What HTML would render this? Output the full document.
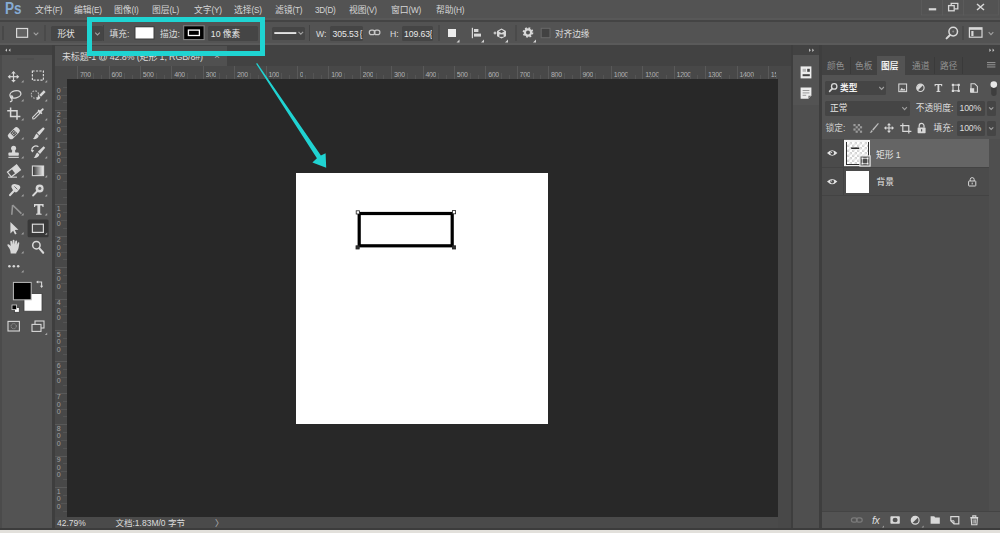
<!DOCTYPE html>
<html lang="zh-CN">
<head>
<meta charset="utf-8">
<title>Photoshop</title>
<style>
html,body{margin:0;padding:0;}
body{width:1000px;height:533px;overflow:hidden;background:#535353;position:relative;
 font-family:"Liberation Sans","Noto Sans CJK SC",sans-serif;font-size:9px;color:#dddddd;}
.a{position:absolute;}
.t{position:absolute;white-space:nowrap;line-height:12px;height:12px;}
.b{font-weight:bold;}
svg{position:absolute;left:0;top:0;overflow:visible;}
.rt{position:absolute;font-size:7px;letter-spacing:-0.3px;color:#b2b2b2;line-height:7px;white-space:nowrap;}
.vt{position:absolute;font-size:7px;color:#a2a2a2;line-height:8px;width:8px;text-align:center;}
.dd{position:absolute;background:#454545;border-radius:1.5px;}
</style>
</head>
<body>
<div class="a" style="left:0px;top:0px;width:1000px;height:18px;background:#535353;"></div>
<div class="a" style="left:0px;top:18px;width:1000px;height:1.5px;background:#585858;"></div>
<div class="a" style="left:0px;top:19.5px;width:1000px;height:2px;background:#444444;"></div>
<div class="t" style="left:5.2px;top:-0.6px;font-size:17.4px;line-height:19px;height:19px;font-weight:bold;color:#86abd3;transform:scaleX(0.78);transform-origin:0 0">Ps</div>
<div class="t" style="left:35px;top:3.5px;font-size:8.8px;color:#d6d6d6">文件<span style="font-size:8.2px;letter-spacing:-0.25px">(F)</span></div>
<div class="t" style="left:74px;top:3.5px;font-size:8.8px;color:#d6d6d6">编辑<span style="font-size:8.2px;letter-spacing:-0.25px">(E)</span></div>
<div class="t" style="left:114px;top:3.5px;font-size:8.8px;color:#d6d6d6">图像<span style="font-size:8.2px;letter-spacing:-0.25px">(I)</span></div>
<div class="t" style="left:152px;top:3.5px;font-size:8.8px;color:#d6d6d6">图层<span style="font-size:8.2px;letter-spacing:-0.25px">(L)</span></div>
<div class="t" style="left:194px;top:3.5px;font-size:8.8px;color:#d6d6d6">文字<span style="font-size:8.2px;letter-spacing:-0.25px">(Y)</span></div>
<div class="t" style="left:234px;top:3.5px;font-size:8.8px;color:#d6d6d6">选择<span style="font-size:8.2px;letter-spacing:-0.25px">(S)</span></div>
<div class="t" style="left:275px;top:3.5px;font-size:8.8px;color:#d6d6d6">滤镜<span style="font-size:8.2px;letter-spacing:-0.25px">(T)</span></div>
<div class="t" style="left:315px;top:3.5px;font-size:8.8px;color:#d6d6d6"><span style="font-size:8.2px;letter-spacing:-0.25px">3D(D)</span></div>
<div class="t" style="left:349px;top:3.5px;font-size:8.8px;color:#d6d6d6">视图<span style="font-size:8.2px;letter-spacing:-0.25px">(V)</span></div>
<div class="t" style="left:391px;top:3.5px;font-size:8.8px;color:#d6d6d6">窗口<span style="font-size:8.2px;letter-spacing:-0.25px">(W)</span></div>
<div class="t" style="left:436px;top:3.5px;font-size:8.8px;color:#d6d6d6">帮助<span style="font-size:8.2px;letter-spacing:-0.25px">(H)</span></div>
<div class="a" style="left:0px;top:21.5px;width:1000px;height:22px;background:#535353;"></div>
<div class="a" style="left:0px;top:43.2px;width:1000px;height:1.5px;background:#5a5a5a;"></div>
<div class="a" style="left:0px;top:44.7px;width:1000px;height:10px;background:#424242;"></div>
<div class="dd" style="left:51px;top:26px;width:52px;height:14.5px"></div>
<div class="t" style="left:57.4px;top:27.5px;font-size:8.7px;color:#e4e4e4">形状</div>
<div class="t" style="left:109.6px;top:27.5px;font-size:8.7px;">填充:</div>
<div class="t" style="left:160px;top:27.5px;font-size:8.7px;">描边:</div>
<div class="dd" style="left:207.5px;top:26px;width:50.5px;height:14.5px"></div>
<div class="t" style="left:210.8px;top:27.5px;font-size:8.7px;color:#e8e8e8">10 像素</div>
<div class="dd" style="left:272px;top:27px;width:33px;height:12.5px"></div>
<div class="t" style="left:316px;top:27.5px;font-size:8.7px;">W:</div>
<div class="dd" style="left:330.4px;top:26px;width:33px;height:14.5px;overflow:hidden"></div>
<div class="t" style="left:332.5px;top:27.5px;font-size:8.7px;letter-spacing:-0.1px;color:#e8e8e8">305.53</div>
<div class="t" style="left:359.5px;top:27.5px;font-size:8.7px;color:#e8e8e8;width:3px;overflow:hidden">{</div>
<div class="t" style="left:390px;top:27.5px;font-size:8.7px;">H:</div>
<div class="dd" style="left:402px;top:26px;width:30.7px;height:14.5px"></div>
<div class="t" style="left:404px;top:27.5px;font-size:8.7px;letter-spacing:-0.1px;color:#e8e8e8">109.63</div>
<div class="t" style="left:429.5px;top:27.5px;font-size:8.7px;color:#e8e8e8;width:2.5px;overflow:hidden">{</div>
<div class="t" style="left:555px;top:27.5px;font-size:8.7px;letter-spacing:-0.1px">对齐边缘</div>
<div class="a" style="left:51.5px;top:45px;width:742px;height:22px;background:#424242;"></div>
<div class="a" style="left:54.5px;top:46px;width:172.5px;height:20px;background:#505050;"></div>
<div class="t tt" style="left:62px;top:50.7px;font-size:9px;letter-spacing:-0.17px">未标题-1 @ 42.8% (矩形 1, RGB/8#)</div>
<div class="t" style="left:214.2px;top:50.2px;font-size:9.5px;color:#c8c8c8">×</div>
<div class="a" style="left:51.5px;top:66px;width:742px;height:462px;background:#424242;"></div>
<div class="a" style="left:54.5px;top:66px;width:723.5px;height:13px;background:#484848;"></div>
<div class="a" style="left:54.5px;top:79px;width:12px;height:438px;background:#484848;"></div>
<div class="a" style="left:66.5px;top:79px;width:711.5px;height:438px;background:#282828;"></div>
<div class="a" style="left:77.2px;top:66px;width:0.8px;height:13px;background:#595959;"></div>
<div class="rt" style="left:80.00px;top:71px;max-width:20.0px;overflow:hidden">700</div>
<div class="a" style="left:85.05px;top:75px;width:0.6px;height:4px;background:#545454;"></div>
<div class="a" style="left:92.9px;top:73px;width:0.6px;height:6px;background:#545454;"></div>
<div class="a" style="left:100.75px;top:75px;width:0.6px;height:4px;background:#545454;"></div>
<div class="a" style="left:108.6px;top:66px;width:0.8px;height:13px;background:#595959;"></div>
<div class="rt" style="left:111.40px;top:71px;max-width:20.0px;overflow:hidden">600</div>
<div class="a" style="left:116.45px;top:75px;width:0.6px;height:4px;background:#545454;"></div>
<div class="a" style="left:124.3px;top:73px;width:0.6px;height:6px;background:#545454;"></div>
<div class="a" style="left:132.15px;top:75px;width:0.6px;height:4px;background:#545454;"></div>
<div class="a" style="left:140.0px;top:66px;width:0.8px;height:13px;background:#595959;"></div>
<div class="rt" style="left:142.80px;top:71px;max-width:20.0px;overflow:hidden">500</div>
<div class="a" style="left:147.85px;top:75px;width:0.6px;height:4px;background:#545454;"></div>
<div class="a" style="left:155.7px;top:73px;width:0.6px;height:6px;background:#545454;"></div>
<div class="a" style="left:163.55px;top:75px;width:0.6px;height:4px;background:#545454;"></div>
<div class="a" style="left:171.4px;top:66px;width:0.8px;height:13px;background:#595959;"></div>
<div class="rt" style="left:174.20px;top:71px;max-width:20.0px;overflow:hidden">400</div>
<div class="a" style="left:179.25px;top:75px;width:0.6px;height:4px;background:#545454;"></div>
<div class="a" style="left:187.1px;top:73px;width:0.6px;height:6px;background:#545454;"></div>
<div class="a" style="left:194.95px;top:75px;width:0.6px;height:4px;background:#545454;"></div>
<div class="a" style="left:202.8px;top:66px;width:0.8px;height:13px;background:#595959;"></div>
<div class="rt" style="left:205.60px;top:71px;max-width:20.0px;overflow:hidden">300</div>
<div class="a" style="left:210.65px;top:75px;width:0.6px;height:4px;background:#545454;"></div>
<div class="a" style="left:218.5px;top:73px;width:0.6px;height:6px;background:#545454;"></div>
<div class="a" style="left:226.35px;top:75px;width:0.6px;height:4px;background:#545454;"></div>
<div class="a" style="left:234.2px;top:66px;width:0.8px;height:13px;background:#595959;"></div>
<div class="rt" style="left:237.00px;top:71px;max-width:20.0px;overflow:hidden">200</div>
<div class="a" style="left:242.05px;top:75px;width:0.6px;height:4px;background:#545454;"></div>
<div class="a" style="left:249.9px;top:73px;width:0.6px;height:6px;background:#545454;"></div>
<div class="a" style="left:257.75px;top:75px;width:0.6px;height:4px;background:#545454;"></div>
<div class="a" style="left:265.6px;top:66px;width:0.8px;height:13px;background:#595959;"></div>
<div class="rt" style="left:268.40px;top:71px;max-width:20.0px;overflow:hidden">100</div>
<div class="a" style="left:273.45px;top:75px;width:0.6px;height:4px;background:#545454;"></div>
<div class="a" style="left:281.3px;top:73px;width:0.6px;height:6px;background:#545454;"></div>
<div class="a" style="left:289.15px;top:75px;width:0.6px;height:4px;background:#545454;"></div>
<div class="a" style="left:297.0px;top:66px;width:0.8px;height:13px;background:#595959;"></div>
<div class="rt" style="left:299.80px;top:71px;max-width:20.0px;overflow:hidden">0</div>
<div class="a" style="left:304.85px;top:75px;width:0.6px;height:4px;background:#545454;"></div>
<div class="a" style="left:312.7px;top:73px;width:0.6px;height:6px;background:#545454;"></div>
<div class="a" style="left:320.55px;top:75px;width:0.6px;height:4px;background:#545454;"></div>
<div class="a" style="left:328.4px;top:66px;width:0.8px;height:13px;background:#595959;"></div>
<div class="rt" style="left:331.20px;top:71px;max-width:20.0px;overflow:hidden">100</div>
<div class="a" style="left:336.25px;top:75px;width:0.6px;height:4px;background:#545454;"></div>
<div class="a" style="left:344.1px;top:73px;width:0.6px;height:6px;background:#545454;"></div>
<div class="a" style="left:351.95px;top:75px;width:0.6px;height:4px;background:#545454;"></div>
<div class="a" style="left:359.8px;top:66px;width:0.8px;height:13px;background:#595959;"></div>
<div class="rt" style="left:362.60px;top:71px;max-width:20.0px;overflow:hidden">200</div>
<div class="a" style="left:367.65px;top:75px;width:0.6px;height:4px;background:#545454;"></div>
<div class="a" style="left:375.5px;top:73px;width:0.6px;height:6px;background:#545454;"></div>
<div class="a" style="left:383.35px;top:75px;width:0.6px;height:4px;background:#545454;"></div>
<div class="a" style="left:391.2px;top:66px;width:0.8px;height:13px;background:#595959;"></div>
<div class="rt" style="left:394.00px;top:71px;max-width:20.0px;overflow:hidden">300</div>
<div class="a" style="left:399.05px;top:75px;width:0.6px;height:4px;background:#545454;"></div>
<div class="a" style="left:406.9px;top:73px;width:0.6px;height:6px;background:#545454;"></div>
<div class="a" style="left:414.75px;top:75px;width:0.6px;height:4px;background:#545454;"></div>
<div class="a" style="left:422.6px;top:66px;width:0.8px;height:13px;background:#595959;"></div>
<div class="rt" style="left:425.40px;top:71px;max-width:20.0px;overflow:hidden">400</div>
<div class="a" style="left:430.45px;top:75px;width:0.6px;height:4px;background:#545454;"></div>
<div class="a" style="left:438.3px;top:73px;width:0.6px;height:6px;background:#545454;"></div>
<div class="a" style="left:446.15px;top:75px;width:0.6px;height:4px;background:#545454;"></div>
<div class="a" style="left:454.0px;top:66px;width:0.8px;height:13px;background:#595959;"></div>
<div class="rt" style="left:456.80px;top:71px;max-width:20.0px;overflow:hidden">500</div>
<div class="a" style="left:461.85px;top:75px;width:0.6px;height:4px;background:#545454;"></div>
<div class="a" style="left:469.7px;top:73px;width:0.6px;height:6px;background:#545454;"></div>
<div class="a" style="left:477.55px;top:75px;width:0.6px;height:4px;background:#545454;"></div>
<div class="a" style="left:485.4px;top:66px;width:0.8px;height:13px;background:#595959;"></div>
<div class="rt" style="left:488.20px;top:71px;max-width:20.0px;overflow:hidden">600</div>
<div class="a" style="left:493.25px;top:75px;width:0.6px;height:4px;background:#545454;"></div>
<div class="a" style="left:501.1px;top:73px;width:0.6px;height:6px;background:#545454;"></div>
<div class="a" style="left:508.95px;top:75px;width:0.6px;height:4px;background:#545454;"></div>
<div class="a" style="left:516.8px;top:66px;width:0.8px;height:13px;background:#595959;"></div>
<div class="rt" style="left:519.60px;top:71px;max-width:20.0px;overflow:hidden">700</div>
<div class="a" style="left:524.65px;top:75px;width:0.6px;height:4px;background:#545454;"></div>
<div class="a" style="left:532.5px;top:73px;width:0.6px;height:6px;background:#545454;"></div>
<div class="a" style="left:540.35px;top:75px;width:0.6px;height:4px;background:#545454;"></div>
<div class="a" style="left:548.2px;top:66px;width:0.8px;height:13px;background:#595959;"></div>
<div class="rt" style="left:551.00px;top:71px;max-width:20.0px;overflow:hidden">800</div>
<div class="a" style="left:556.05px;top:75px;width:0.6px;height:4px;background:#545454;"></div>
<div class="a" style="left:563.9px;top:73px;width:0.6px;height:6px;background:#545454;"></div>
<div class="a" style="left:571.75px;top:75px;width:0.6px;height:4px;background:#545454;"></div>
<div class="a" style="left:579.6px;top:66px;width:0.8px;height:13px;background:#595959;"></div>
<div class="rt" style="left:582.40px;top:71px;max-width:20.0px;overflow:hidden">900</div>
<div class="a" style="left:587.45px;top:75px;width:0.6px;height:4px;background:#545454;"></div>
<div class="a" style="left:595.3px;top:73px;width:0.6px;height:6px;background:#545454;"></div>
<div class="a" style="left:603.15px;top:75px;width:0.6px;height:4px;background:#545454;"></div>
<div class="a" style="left:611.0px;top:66px;width:0.8px;height:13px;background:#595959;"></div>
<div class="rt" style="left:613.80px;top:71px;max-width:20.0px;overflow:hidden">1000</div>
<div class="a" style="left:618.85px;top:75px;width:0.6px;height:4px;background:#545454;"></div>
<div class="a" style="left:626.7px;top:73px;width:0.6px;height:6px;background:#545454;"></div>
<div class="a" style="left:634.55px;top:75px;width:0.6px;height:4px;background:#545454;"></div>
<div class="a" style="left:642.4px;top:66px;width:0.8px;height:13px;background:#595959;"></div>
<div class="rt" style="left:645.20px;top:71px;max-width:20.0px;overflow:hidden">1100</div>
<div class="a" style="left:650.25px;top:75px;width:0.6px;height:4px;background:#545454;"></div>
<div class="a" style="left:658.1px;top:73px;width:0.6px;height:6px;background:#545454;"></div>
<div class="a" style="left:665.95px;top:75px;width:0.6px;height:4px;background:#545454;"></div>
<div class="a" style="left:673.8px;top:66px;width:0.8px;height:13px;background:#595959;"></div>
<div class="rt" style="left:676.60px;top:71px;max-width:20.0px;overflow:hidden">1200</div>
<div class="a" style="left:681.65px;top:75px;width:0.6px;height:4px;background:#545454;"></div>
<div class="a" style="left:689.5px;top:73px;width:0.6px;height:6px;background:#545454;"></div>
<div class="a" style="left:697.35px;top:75px;width:0.6px;height:4px;background:#545454;"></div>
<div class="a" style="left:705.2px;top:66px;width:0.8px;height:13px;background:#595959;"></div>
<div class="rt" style="left:708.00px;top:71px;max-width:20.0px;overflow:hidden">1300</div>
<div class="a" style="left:713.05px;top:75px;width:0.6px;height:4px;background:#545454;"></div>
<div class="a" style="left:720.9px;top:73px;width:0.6px;height:6px;background:#545454;"></div>
<div class="a" style="left:728.75px;top:75px;width:0.6px;height:4px;background:#545454;"></div>
<div class="a" style="left:736.6px;top:66px;width:0.8px;height:13px;background:#595959;"></div>
<div class="rt" style="left:739.40px;top:71px;max-width:20.0px;overflow:hidden">1400</div>
<div class="a" style="left:744.45px;top:75px;width:0.6px;height:4px;background:#545454;"></div>
<div class="a" style="left:752.3px;top:73px;width:0.6px;height:6px;background:#545454;"></div>
<div class="a" style="left:760.15px;top:75px;width:0.6px;height:4px;background:#545454;"></div>
<div class="a" style="left:768.0px;top:66px;width:0.8px;height:13px;background:#595959;"></div>
<div class="rt" style="left:770.80px;top:71px;max-width:4.8px;overflow:hidden">1500</div>
<div class="a" style="left:775.85px;top:75px;width:0.6px;height:4px;background:#545454;"></div>
<div class="vt" style="left:54.6px;top:86.80px">0</div>
<div class="vt" style="left:54.6px;top:94.30px">0</div>
<div class="a" style="left:62.5px;top:86.65px;width:4px;height:0.6px;background:#545454;"></div>
<div class="a" style="left:60.5px;top:94.5px;width:6px;height:0.6px;background:#545454;"></div>
<div class="a" style="left:62.5px;top:102.35px;width:4px;height:0.6px;background:#545454;"></div>
<div class="a" style="left:54.5px;top:110.2px;width:12px;height:0.8px;background:#595959;"></div>
<div class="vt" style="left:54.6px;top:110.70px">2</div>
<div class="vt" style="left:54.6px;top:118.20px">0</div>
<div class="vt" style="left:54.6px;top:125.70px">0</div>
<div class="a" style="left:62.5px;top:118.05px;width:4px;height:0.6px;background:#545454;"></div>
<div class="a" style="left:60.5px;top:125.9px;width:6px;height:0.6px;background:#545454;"></div>
<div class="a" style="left:62.5px;top:133.75px;width:4px;height:0.6px;background:#545454;"></div>
<div class="a" style="left:54.5px;top:141.6px;width:12px;height:0.8px;background:#595959;"></div>
<div class="vt" style="left:54.6px;top:142.10px">1</div>
<div class="vt" style="left:54.6px;top:149.60px">0</div>
<div class="vt" style="left:54.6px;top:157.10px">0</div>
<div class="a" style="left:62.5px;top:149.45px;width:4px;height:0.6px;background:#545454;"></div>
<div class="a" style="left:60.5px;top:157.3px;width:6px;height:0.6px;background:#545454;"></div>
<div class="a" style="left:62.5px;top:165.15px;width:4px;height:0.6px;background:#545454;"></div>
<div class="a" style="left:54.5px;top:173.0px;width:12px;height:0.8px;background:#595959;"></div>
<div class="vt" style="left:54.6px;top:173.50px">0</div>
<div class="a" style="left:62.5px;top:180.85px;width:4px;height:0.6px;background:#545454;"></div>
<div class="a" style="left:60.5px;top:188.7px;width:6px;height:0.6px;background:#545454;"></div>
<div class="a" style="left:62.5px;top:196.55px;width:4px;height:0.6px;background:#545454;"></div>
<div class="a" style="left:54.5px;top:204.4px;width:12px;height:0.8px;background:#595959;"></div>
<div class="vt" style="left:54.6px;top:204.90px">1</div>
<div class="vt" style="left:54.6px;top:212.40px">0</div>
<div class="vt" style="left:54.6px;top:219.90px">0</div>
<div class="a" style="left:62.5px;top:212.25px;width:4px;height:0.6px;background:#545454;"></div>
<div class="a" style="left:60.5px;top:220.1px;width:6px;height:0.6px;background:#545454;"></div>
<div class="a" style="left:62.5px;top:227.95px;width:4px;height:0.6px;background:#545454;"></div>
<div class="a" style="left:54.5px;top:235.8px;width:12px;height:0.8px;background:#595959;"></div>
<div class="vt" style="left:54.6px;top:236.30px">2</div>
<div class="vt" style="left:54.6px;top:243.80px">0</div>
<div class="vt" style="left:54.6px;top:251.30px">0</div>
<div class="a" style="left:62.5px;top:243.65px;width:4px;height:0.6px;background:#545454;"></div>
<div class="a" style="left:60.5px;top:251.5px;width:6px;height:0.6px;background:#545454;"></div>
<div class="a" style="left:62.5px;top:259.35px;width:4px;height:0.6px;background:#545454;"></div>
<div class="a" style="left:54.5px;top:267.2px;width:12px;height:0.8px;background:#595959;"></div>
<div class="vt" style="left:54.6px;top:267.70px">3</div>
<div class="vt" style="left:54.6px;top:275.20px">0</div>
<div class="vt" style="left:54.6px;top:282.70px">0</div>
<div class="a" style="left:62.5px;top:275.05px;width:4px;height:0.6px;background:#545454;"></div>
<div class="a" style="left:60.5px;top:282.9px;width:6px;height:0.6px;background:#545454;"></div>
<div class="a" style="left:62.5px;top:290.75px;width:4px;height:0.6px;background:#545454;"></div>
<div class="a" style="left:54.5px;top:298.6px;width:12px;height:0.8px;background:#595959;"></div>
<div class="vt" style="left:54.6px;top:299.10px">4</div>
<div class="vt" style="left:54.6px;top:306.60px">0</div>
<div class="vt" style="left:54.6px;top:314.10px">0</div>
<div class="a" style="left:62.5px;top:306.45px;width:4px;height:0.6px;background:#545454;"></div>
<div class="a" style="left:60.5px;top:314.3px;width:6px;height:0.6px;background:#545454;"></div>
<div class="a" style="left:62.5px;top:322.15px;width:4px;height:0.6px;background:#545454;"></div>
<div class="a" style="left:54.5px;top:330.0px;width:12px;height:0.8px;background:#595959;"></div>
<div class="vt" style="left:54.6px;top:330.50px">5</div>
<div class="vt" style="left:54.6px;top:338.00px">0</div>
<div class="vt" style="left:54.6px;top:345.50px">0</div>
<div class="a" style="left:62.5px;top:337.85px;width:4px;height:0.6px;background:#545454;"></div>
<div class="a" style="left:60.5px;top:345.7px;width:6px;height:0.6px;background:#545454;"></div>
<div class="a" style="left:62.5px;top:353.55px;width:4px;height:0.6px;background:#545454;"></div>
<div class="a" style="left:54.5px;top:361.4px;width:12px;height:0.8px;background:#595959;"></div>
<div class="vt" style="left:54.6px;top:361.90px">6</div>
<div class="vt" style="left:54.6px;top:369.40px">0</div>
<div class="vt" style="left:54.6px;top:376.90px">0</div>
<div class="a" style="left:62.5px;top:369.25px;width:4px;height:0.6px;background:#545454;"></div>
<div class="a" style="left:60.5px;top:377.1px;width:6px;height:0.6px;background:#545454;"></div>
<div class="a" style="left:62.5px;top:384.95px;width:4px;height:0.6px;background:#545454;"></div>
<div class="a" style="left:54.5px;top:392.8px;width:12px;height:0.8px;background:#595959;"></div>
<div class="vt" style="left:54.6px;top:393.30px">7</div>
<div class="vt" style="left:54.6px;top:400.80px">0</div>
<div class="vt" style="left:54.6px;top:408.30px">0</div>
<div class="a" style="left:62.5px;top:400.65px;width:4px;height:0.6px;background:#545454;"></div>
<div class="a" style="left:60.5px;top:408.5px;width:6px;height:0.6px;background:#545454;"></div>
<div class="a" style="left:62.5px;top:416.35px;width:4px;height:0.6px;background:#545454;"></div>
<div class="a" style="left:54.5px;top:424.2px;width:12px;height:0.8px;background:#595959;"></div>
<div class="vt" style="left:54.6px;top:424.70px">8</div>
<div class="vt" style="left:54.6px;top:432.20px">0</div>
<div class="vt" style="left:54.6px;top:439.70px">0</div>
<div class="a" style="left:62.5px;top:432.05px;width:4px;height:0.6px;background:#545454;"></div>
<div class="a" style="left:60.5px;top:439.9px;width:6px;height:0.6px;background:#545454;"></div>
<div class="a" style="left:62.5px;top:447.75px;width:4px;height:0.6px;background:#545454;"></div>
<div class="a" style="left:54.5px;top:455.6px;width:12px;height:0.8px;background:#595959;"></div>
<div class="vt" style="left:54.6px;top:456.10px">9</div>
<div class="vt" style="left:54.6px;top:463.60px">0</div>
<div class="vt" style="left:54.6px;top:471.10px">0</div>
<div class="a" style="left:62.5px;top:463.45px;width:4px;height:0.6px;background:#545454;"></div>
<div class="a" style="left:60.5px;top:471.3px;width:6px;height:0.6px;background:#545454;"></div>
<div class="a" style="left:62.5px;top:479.15px;width:4px;height:0.6px;background:#545454;"></div>
<div class="a" style="left:54.5px;top:487.0px;width:12px;height:0.8px;background:#595959;"></div>
<div class="vt" style="left:54.6px;top:487.50px">1</div>
<div class="vt" style="left:54.6px;top:495.00px">0</div>
<div class="vt" style="left:54.6px;top:502.50px">0</div>
<div class="a" style="left:62.5px;top:494.85px;width:4px;height:0.6px;background:#545454;"></div>
<div class="a" style="left:60.5px;top:502.7px;width:6px;height:0.6px;background:#545454;"></div>
<div class="a" style="left:62.5px;top:510.55px;width:4px;height:0.6px;background:#545454;"></div>
<div class="a" style="left:54.5px;top:66px;width:12px;height:13px;background:#484848;"></div>
<div class="a" style="left:296px;top:173px;width:252px;height:251px;background:#ffffff;"></div>
<div class="a" style="left:54.5px;top:517px;width:738.5px;height:11px;background:#4a4a4a;"></div>
<div class="t" style="left:57px;top:516.5px;font-size:8.5px;">42.79%</div>
<div class="t" style="left:115.5px;top:516.5px;font-size:8.5px;">文档:1.83M/0 字节</div>
<div class="t" style="left:215px;top:516.5px;font-size:8.5px;color:#bdbdbd">〉</div>
<div class="a" style="left:778px;top:66px;width:12.5px;height:462px;background:#484848;"></div>
<div class="a" style="left:790.5px;top:45px;width:2.5px;height:483px;background:#3e3e3e;"></div>
<div class="a" style="left:0px;top:54.5px;width:51.5px;height:473.5px;background:#535353;"></div>
<div class="a" style="left:0px;top:45px;width:51.5px;height:9.5px;background:#424242;"></div>
<div class="a" style="left:0px;top:54.5px;width:1.5px;height:473.5px;background:#4b4b4b;"></div>
<div class="a" style="left:51.5px;top:45px;width:3px;height:483px;background:#3e3e3e;"></div>
<div class="a" style="left:793px;top:45px;width:26px;height:9.5px;background:#424242;"></div>
<div class="a" style="left:793px;top:54.5px;width:26px;height:50px;background:#535353;"></div>
<div class="a" style="left:793px;top:104.5px;width:26px;height:423.5px;background:#4f4f4f;"></div>
<div class="a" style="left:819px;top:45px;width:3px;height:483px;background:#3e3e3e;"></div>
<div class="a" style="left:822px;top:45px;width:178px;height:10.5px;background:#424242;"></div>
<div class="a" style="left:822px;top:55.5px;width:178px;height:19.5px;background:#424242;"></div>
<div class="a" style="left:876.5px;top:55.5px;width:28px;height:20px;background:#535353;"></div>
<div class="a" style="left:822px;top:75px;width:178px;height:63.5px;background:#535353;"></div>
<div class="a" style="left:822px;top:138.5px;width:178px;height:372.5px;background:#4b4b4b;"></div>
<div class="a" style="left:988.5px;top:138.5px;width:11.5px;height:372.5px;background:#4f4f4f;"></div>
<div class="a" style="left:822px;top:511px;width:178px;height:17px;background:#535353;"></div>
<div class="a" style="left:822px;top:510.5px;width:178px;height:0.8px;background:#444444;"></div>
<div class="t" style="left:827px;top:59.5px;font-size:8.7px;color:#929292;">颜色</div>
<div class="t" style="left:855px;top:59.5px;font-size:8.7px;color:#929292;">色板</div>
<div class="t" style="left:881px;top:59.5px;font-size:8.7px;color:#f0f0f0;font-weight:bold;">图层</div>
<div class="t" style="left:912px;top:59.5px;font-size:8.7px;color:#929292;">通道</div>
<div class="t" style="left:940px;top:59.5px;font-size:8.7px;color:#929292;">路径</div>
<div class="a" style="left:850px;top:57px;width:0.8px;height:17px;background:#3a3a3a;"></div>
<div class="a" style="left:934px;top:57px;width:0.8px;height:17px;background:#3a3a3a;"></div>
<div class="a" style="left:962px;top:57px;width:0.8px;height:17px;background:#3a3a3a;"></div>
<div class="dd" style="left:824.5px;top:81px;width:61.5px;height:13.5px"></div>
<div class="t" style="left:840px;top:82px;font-size:8.7px;font-weight:bold;color:#f0f0f0">类型</div>
<div class="dd" style="left:824.5px;top:101px;width:85px;height:14.5px"></div>
<div class="t" style="left:830px;top:102.3px;font-size:8.7px;color:#e6e6e6">正常</div>
<div class="t" style="left:915.8px;top:102.3px;font-size:8.7px;letter-spacing:0.1px">不透明度:</div>
<div class="dd" style="left:957px;top:101px;width:28px;height:14.5px"></div>
<div class="t" style="left:959.5px;top:102.3px;font-size:8.7px;letter-spacing:-0.2px">100%</div>
<div class="dd" style="left:986.5px;top:101px;width:9.5px;height:14.5px"></div>
<div class="t" style="left:825.5px;top:122px;font-size:8.7px;color:#cfcfcf">锁定:</div>
<div class="t" style="left:933.5px;top:122px;font-size:8.7px;">填充:</div>
<div class="dd" style="left:957px;top:121px;width:28px;height:14.5px"></div>
<div class="t" style="left:959.5px;top:122.3px;font-size:8.7px;letter-spacing:-0.2px">100%</div>
<div class="dd" style="left:986.5px;top:121px;width:9.5px;height:14.5px"></div>
<div class="a" style="left:843.5px;top:139px;width:145px;height:28px;background:#656565;"></div>
<div class="a" style="left:822px;top:167px;width:166.5px;height:0.8px;background:#434343;"></div>
<div class="a" style="left:822px;top:195px;width:166.5px;height:0.8px;background:#434343;"></div>
<div class="a" style="left:842.8px;top:139px;width:0.7px;height:56px;background:#434343;"></div>
<div class="t" style="left:876px;top:148.5px;font-size:8.7px;color:#e4e4e4">矩形 1</div>
<div class="t" style="left:876.5px;top:176px;font-size:8.7px;color:#e4e4e4">背景</div>
<div class="a" style="left:844.3px;top:140.2px;width:25.8px;height:25.9px;background:#f4f4f4;"></div>
<div class="a" style="left:845.7px;top:141.6px;width:23px;height:23.1px;background:#2e2e2e;"></div>
<div class="a" style="left:846.5px;top:142.4px;width:21.4px;height:21.5px;background-color:#fff;background-image:linear-gradient(45deg,#d4d4d4 25%,transparent 25%,transparent 75%,#d4d4d4 75%),linear-gradient(45deg,#d4d4d4 25%,transparent 25%,transparent 75%,#d4d4d4 75%);background-size:5px 5px;background-position:0 0,2.5px 2.5px;"></div>
<div class="a" style="left:846px;top:171px;width:22.5px;height:21.5px;background:#ffffff;"></div>
<div class="t" style="left:872px;top:513.5px;font-size:10.5px;font-style:italic;color:#dedede;letter-spacing:-0.3px">fx</div>
<div class="a" style="left:0px;top:528px;width:1000px;height:1.6px;background:#3c3c3c;"></div>
<div class="a" style="left:0px;top:529.8px;width:1000px;height:3.2px;background:#e2e0db;"></div>
<div class="a" style="left:87.2px;top:16.6px;width:168.2px;height:29px;border:5.7px solid #1fd4d2;"></div>
<svg width="1000" height="533" viewBox="0 0 1000 533">
<g fill="none" stroke="#5d5d5d" stroke-width="0.8"><rect x="921.5" y="-1" width="21" height="16"/><rect x="942.5" y="-1" width="21" height="16"/><rect x="963.5" y="-1" width="35" height="16"/></g>
<rect x="928.8" y="8.2" width="7.4" height="2.2" fill="#d8d8d8"/>
<g fill="none" stroke="#d8d8d8" stroke-width="1.3"><rect x="948.6" y="5.6" width="5.6" height="5.2" fill="#535353"/><path d="M951.2 5.4 V3.4 H957.8 V8.8 H954.6"/></g>
<path d="M977 4 L984 10 M984 4 L977 10" stroke="#d8d8d8" stroke-width="1.5" fill="none"/>
<g fill="#3f3f3f"><rect x="2.5" y="26" width="1" height="14"/></g>
<rect x="16.6" y="28.5" width="11" height="8.8" fill="#626262" stroke="#d8d8d8" stroke-width="1.2"/>
<path d="M33.70 32.60 L36.00 35.00 L38.30 32.60" fill="none" stroke="#a0a0a0" stroke-width="1.1"/>
<rect x="44.50" y="25" width="1" height="16" fill="#434343"/>
<path d="M95.20 32.60 L97.50 35.00 L99.80 32.60" fill="none" stroke="#a0a0a0" stroke-width="1.1"/>
<rect x="103.00" y="25" width="1" height="16" fill="#434343"/>
<rect x="134.5" y="26.3" width="20" height="13.2" fill="#3c3c3c"/>
<rect x="135.5" y="27.3" width="18" height="11.2" fill="#ffffff"/>
<rect x="183.7" y="25.8" width="20.4" height="13.8" fill="#000" stroke="#8a8a8a" stroke-width="1"/>
<rect x="188.4" y="30.1" width="11" height="5.4" fill="none" stroke="#fff" stroke-width="1.3"/>
<rect x="274.3" y="32.2" width="22" height="1.7" fill="#f4f4f4"/>
<path d="M298.50 31.80 L300.80 34.20 L303.10 31.80" fill="none" stroke="#a0a0a0" stroke-width="1.1"/>
<rect x="309.00" y="25" width="1" height="16" fill="#434343"/>
<g fill="none" stroke="#c8c8c8" stroke-width="1.2"><rect x="369.3" y="30.2" width="5.6" height="4.4" rx="2.2"/><rect x="374.3" y="30.2" width="5.6" height="4.4" rx="2.2"/></g>
<rect x="438.50" y="25" width="1" height="16" fill="#434343"/>
<rect x="448" y="29" width="8" height="8" fill="#ececec"/>
<path d="M459.50 42.60 L459.50 39.60 L456.50 42.60 Z" fill="#d4d4d4"/>
<g fill="#d8d8d8"><rect x="471.8" y="27.8" width="1.2" height="10.4"/><rect x="474" y="29" width="4.4" height="3"/><rect x="474" y="33.6" width="7" height="3"/></g>
<path d="M484.00 42.60 L484.00 39.60 L481.00 42.60 Z" fill="#d4d4d4"/>
<g fill="#d8d8d8"><path d="M497 31 L501.5 28.4 L506 31 L506 36.2 L501.5 38.6 L497 36.2 Z"/><rect x="493.6" y="32.4" width="2.8" height="1.2"/><rect x="494.4" y="31.6" width="1.2" height="2.8"/></g>
<path d="M498.6 31.4 L501.5 29.8 L504.4 31.4 L501.5 33 Z" fill="#535353"/><rect x="499.4" y="34.4" width="4.2" height="2.4" fill="#535353"/>
<path d="M508.00 42.60 L508.00 39.60 L505.00 42.60 Z" fill="#d4d4d4"/>
<rect x="515.50" y="25" width="1" height="16" fill="#434343"/>
<circle cx="528" cy="32.5" r="3.1" fill="none" stroke="#d8d8d8" stroke-width="2.2"/>
<circle cx="528" cy="32.5" r="4.5" fill="none" stroke="#d8d8d8" stroke-width="1.7" stroke-dasharray="1.767 1.767"/>
<path d="M536.00 42.60 L536.00 39.60 L533.00 42.60 Z" fill="#d4d4d4"/>
<rect x="541.2" y="28.3" width="8.8" height="9.4" fill="#424242" stroke="#686868" stroke-width="1"/>
<circle cx="953.2" cy="31.6" r="4.3" fill="none" stroke="#d8d8d8" stroke-width="1.5"/><path d="M950 35 L946.6 38.4" stroke="#d8d8d8" stroke-width="2" stroke-linecap="round"/>
<circle cx="953.2" cy="31.6" r="1" fill="#8a8a8a"/>
<rect x="962.50" y="26" width="1" height="14" fill="#434343"/>
<rect x="969.4" y="27.8" width="12.6" height="9.4" fill="none" stroke="#d8d8d8" stroke-width="1.2"/><rect x="969.4" y="27.8" width="12.6" height="2" fill="#d8d8d8"/><rect x="971.3" y="31" width="2.2" height="5" fill="#d8d8d8"/>
<path d="M988.70 32.20 L991.00 34.60 L993.30 32.20" fill="none" stroke="#a0a0a0" stroke-width="1.1"/>
<path d="M809.1 48.599999999999994 L810.8000000000001 50.3 L809.1 52.0 Z M812.3000000000001 48.599999999999994 L814.0 50.3 L812.3000000000001 52.0 Z" fill="#c9c9c9"/>
<path d="M989.4 48.599999999999994 L991.1 50.3 L989.4 52.0 Z M992.6 48.599999999999994 L994.3 50.3 L992.6 52.0 Z" fill="#c9c9c9"/>
<path d="M5.2 48.6 L7 50.2 L5.2 51.8 Z M8.6 48.6 L10.4 50.2 L8.6 51.8 Z" fill="#c9c9c9" transform="rotate(180 7.8 50.2)"/>
<rect x="17" y="58.5" width="17" height="1" fill="#4a4a4a"/>
<g fill="#d8d8d8"><rect x="9.5" y="76.10000000000001" width="8" height="1.2"/><rect x="12.9" y="72.7" width="1.2" height="8"/><path d="M13.5 70.9 l2.3 2.6 h-4.6 Z M13.5 82.5 l2.3 -2.6 h-4.6 Z M7.7 76.7 l2.6 -2.3 v4.6 Z M19.3 76.7 l-2.6 -2.3 v4.6 Z"/></g>
<path d="M23.60 82.40 L23.60 80.00 L21.20 82.40 Z" fill="#a4a4a4"/>
<rect x="32.4" y="71" width="11" height="9.2" fill="none" stroke="#d8d8d8" stroke-width="1.2" stroke-dasharray="2.2 1.3"/>
<path d="M47.20 82.40 L47.20 80.00 L44.80 82.40 Z" fill="#a4a4a4"/>
<g fill="none" stroke="#d8d8d8" stroke-width="1.3"><ellipse cx="15.4" cy="94.4" rx="5.6" ry="3.6" transform="rotate(-14 15.4 94.4)"/><path d="M11.3 96.6 C10.4 98.4 12.6 98.8 12 100.4 C11.6 101.4 10.6 101.8 10 101.4"/><circle cx="11.6" cy="97" r="1.1"/></g>
<path d="M23.60 101.40 L23.60 99.00 L21.20 101.40 Z" fill="#a4a4a4"/>
<g fill="none" stroke="#b4b4b4" stroke-width="1.1" stroke-dasharray="1.7 1.2"><circle cx="34.9" cy="94.6" r="3.7"/></g>
<path d="M43.8 90.2 L45.6 92 L41 96.8 L39.2 95 Z" fill="#d8d8d8"/><path d="M38.6 95.6 L40.4 97.4 C39.8 99.4 37.6 100 36 99.6 C37.4 98.6 37.4 96.8 38.6 95.6 Z" fill="#d8d8d8"/>
<path d="M47.20 101.40 L47.20 99.00 L44.80 101.40 Z" fill="#a4a4a4"/>
<g fill="none" stroke="#d8d8d8" stroke-width="1.5"><path d="M10.6 107.6 V116.6 H20.4"/><path d="M7.2 110.8 H17 V119.8"/></g>
<path d="M23.60 120.40 L23.60 118.00 L21.20 120.40 Z" fill="#a4a4a4"/>
<g><path d="M33 119 L32.6 117.4 L38.6 111.4 L40.2 113 L34.4 118.8 Z" fill="none" stroke="#d8d8d8" stroke-width="1.1"/><path d="M37.6 110.4 L41.4 114.2 L42.4 113.2 L41.4 112 L43.6 109.8 C44.2 109 43 107.6 42.2 108.4 L40 110.6 L38.6 109.4 Z" fill="#d8d8d8"/></g>
<path d="M47.20 120.40 L47.20 118.00 L44.80 120.40 Z" fill="#a4a4a4"/>
<g transform="rotate(-45 13.8 133.2)"><rect x="7" y="130" width="13.6" height="6.4" rx="2.6" fill="#d8d8d8"/><rect x="11.4" y="130.6" width="4.8" height="5.2" fill="#535353"/><g fill="#d8d8d8"><circle cx="12.8" cy="132.2" r="0.6"/><circle cx="14.8" cy="132.2" r="0.6"/><circle cx="12.8" cy="134.2" r="0.6"/><circle cx="14.8" cy="134.2" r="0.6"/></g></g>
<path d="M23.60 139.40 L23.60 137.00 L21.20 139.40 Z" fill="#a4a4a4"/>
<path d="M43.2 127.2 L44.8 128.8 L39.4 135.2 L37 132.8 Z" fill="#d8d8d8"/><path d="M36.4 133.4 L38.8 135.8 C38.2 138.4 35.2 139.6 32.8 139 C34.6 137.8 34.8 135 36.4 133.4 Z" fill="#d8d8d8"/>
<path d="M47.20 139.40 L47.20 137.00 L44.80 139.40 Z" fill="#a4a4a4"/>
<g fill="#d8d8d8"><circle cx="13.6" cy="148.2" r="2.5"/><path d="M12.4 149.6 H14.8 L15.4 153 H11.8 Z"/><rect x="8.4" y="152.6" width="10.4" height="3.2" rx="0.8"/><rect x="8.4" y="156.8" width="10.4" height="1.1"/></g>
<path d="M23.60 158.40 L23.60 156.00 L21.20 158.40 Z" fill="#a4a4a4"/>
<path d="M43.6 146.2 L45.2 147.8 L40 154 L37.8 151.8 Z" fill="#d8d8d8"/><path d="M37.2 152.4 L39.4 154.6 C38.8 157.2 36 158.4 33.6 157.8 C35.4 156.6 35.6 154 37.2 152.4 Z" fill="#d8d8d8"/><path d="M38.4 146.8 A4 4 0 0 0 32.2 151.4" fill="none" stroke="#d8d8d8" stroke-width="1.1"/><path d="M30.8 150 L32.4 152.6 L34.2 150.2 Z" fill="#d8d8d8"/>
<path d="M47.20 158.40 L47.20 156.00 L44.80 158.40 Z" fill="#a4a4a4"/>
<g transform="rotate(-38 14 171)"><rect x="8.2" y="167.8" width="11.6" height="6.2" fill="none" stroke="#d8d8d8" stroke-width="1.2"/><rect x="13.4" y="167.8" width="6.4" height="6.2" fill="#d8d8d8"/></g><rect x="8" y="176.6" width="9" height="1.1" fill="#d8d8d8"/>
<path d="M23.60 177.40 L23.60 175.00 L21.20 177.40 Z" fill="#a4a4a4"/>
<defs><linearGradient id="gr" x1="0" x2="1" y1="0" y2="0"><stop offset="0" stop-color="#2e2e2e"/><stop offset="1" stop-color="#f0f0f0"/></linearGradient></defs><rect x="32.4" y="166" width="11.2" height="9.6" fill="url(#gr)" stroke="#d8d8d8" stroke-width="1.1"/>
<path d="M47.20 177.40 L47.20 175.00 L44.80 177.40 Z" fill="#a4a4a4"/>
<path d="M11.4 187.2 C11 185 13.4 183.6 15.6 184.2 L18.6 185 C20.4 185.6 20.8 187.6 19.8 188.8 L17.6 191.6 C16.8 192.6 15.4 192.6 14.6 191.8 L10.6 196 C9.8 196.8 8.4 195.6 9.2 194.6 L13 190.2 Z" fill="#d8d8d8"/><path d="M14.4 186.4 L17.4 189.4" stroke="#535353" stroke-width="0.8"/>
<path d="M23.60 196.40 L23.60 194.00 L21.20 196.40 Z" fill="#a4a4a4"/>
<circle cx="39.6" cy="188.6" r="4" fill="#d8d8d8"/><circle cx="39.8" cy="188.4" r="1.6" fill="#6c6c6c"/><path d="M36.8 191.6 L33.2 195.4" stroke="#d8d8d8" stroke-width="2.1" stroke-linecap="round"/>
<path d="M47.20 196.40 L47.20 194.00 L44.80 196.40 Z" fill="#a4a4a4"/>
<path d="M12.6 205 L11.8 214.8 M12.6 205 L21.4 213.6" stroke="#969696" stroke-width="1.6" fill="none"/>
<path d="M23.60 215.40 L23.60 213.00 L21.20 215.40 Z" fill="#a4a4a4"/>
<path d="M34 204 H43.6 V207 H42.6 L42 205.4 H40.2 V213.4 L41.6 213.8 V214.8 H36 V213.8 L37.4 213.4 V205.4 H35.6 L35 207 H34 Z" fill="#d8d8d8"/>
<path d="M47.20 215.40 L47.20 213.00 L44.80 215.40 Z" fill="#a4a4a4"/>
<path d="M10.4 222 L10.4 233.4 L13.2 230.8 L15 234.6 L16.6 233.8 L14.8 230 L18.4 229.8 Z" fill="#d8d8d8"/>
<path d="M23.60 234.40 L23.60 232.00 L21.20 234.40 Z" fill="#a4a4a4"/>
<rect x="27.6" y="219.6" width="21" height="17.6" rx="1.5" fill="#383838"/>
<rect x="32.4" y="224.2" width="11" height="8.2" fill="#4a4a4a" stroke="#d8d8d8" stroke-width="1.2"/>
<path d="M47.20 234.80 L47.20 232.40 L44.80 234.80 Z" fill="#a4a4a4"/>
<g transform="translate(14 0) scale(1.1 1) translate(-14 1.2)"><path d="M9.6 246.8 C8.4 245.2 7.4 243.6 8.4 243 C9.4 242.6 10.4 244 11 244.8 L10.6 240.4 C10.6 239.2 12 239.2 12.2 240.4 L12.6 243.4 L12.8 239.4 C12.8 238.2 14.4 238.2 14.4 239.4 L14.6 243.4 L15.2 240 C15.4 238.8 16.8 239 16.8 240.2 L16.6 243.8 L17.4 241.6 C17.8 240.6 19 241 18.8 242 C18.4 244.4 18.4 247.4 17.2 249.4 C16.4 250.8 16 251.6 16 252.4 H11 C11 250.6 10.4 248 9.6 246.8 Z" fill="#d8d8d8"/></g>
<path d="M23.60 253.40 L23.60 251.00 L21.20 253.40 Z" fill="#a4a4a4"/>
<circle cx="36.4" cy="245.2" r="3.7" fill="none" stroke="#d8d8d8" stroke-width="1.5"/><path d="M39.4 248.4 L43.2 252.8" stroke="#d8d8d8" stroke-width="2.1" stroke-linecap="round"/>
<g fill="#d8d8d8"><circle cx="9.4" cy="266.2" r="1.25"/><circle cx="13.8" cy="266.2" r="1.25"/><circle cx="18.2" cy="266.2" r="1.25"/></g>
<path d="M23.60 272.40 L23.60 270.00 L21.20 272.40 Z" fill="#a4a4a4"/>
<rect x="24" y="293.6" width="18" height="17.6" fill="#ffffff" stroke="#3c3c3c" stroke-width="0.8"/>
<rect x="13.4" y="282.4" width="17.8" height="17.4" fill="#000000" stroke="#bdbdbd" stroke-width="1"/>
<path d="M37.6 282 H41.6 V286.4" fill="none" stroke="#d8d8d8" stroke-width="1.1"/><path d="M36 282 L38.2 280.4 V283.6 Z M41.6 288 L40 285.8 H43.2 Z" fill="#d8d8d8"/>
<rect x="14.6" y="307.6" width="4.6" height="4.6" fill="#ffffff" stroke="#2a2a2a" stroke-width="0.6"/><rect x="12" y="305" width="4.6" height="4.6" fill="#000" stroke="#d0d0d0" stroke-width="0.8"/>
<rect x="8" y="321.4" width="11.4" height="9.6" fill="none" stroke="#d8d8d8" stroke-width="1.1"/><circle cx="13.7" cy="326.2" r="2.6" fill="none" stroke="#a0a0a0" stroke-width="0.9" stroke-dasharray="1.2 0.9"/>
<rect x="35" y="321" width="9" height="7" fill="#535353" stroke="#d8d8d8" stroke-width="1.1"/><rect x="32" y="324.4" width="9" height="7" fill="#535353" stroke="#d8d8d8" stroke-width="1.1"/>
<path d="M47.20 335.00 L47.20 332.60 L44.80 335.00 Z" fill="#a4a4a4"/>
<rect x="800.6" y="66.4" width="10.8" height="12" fill="#ededed"/><rect x="802.6" y="68.8" width="3.4" height="3" fill="#b5b5b5"/><rect x="807.2" y="68.8" width="2.6" height="3" fill="#444"/><rect x="802.6" y="74.2" width="7.2" height="2" fill="#444"/>
<path d="M800.6 87.4 H811.4 V95.8 L808.4 98.8 H800.6 Z" fill="#ededed"/><g fill="#9a9a9a"><rect x="802.6" y="90" width="6.8" height="1"/><rect x="802.6" y="92.4" width="6.8" height="1"/><rect x="802.6" y="94.8" width="3.6" height="1"/></g><path d="M808.4 98.8 V95.8 H811.4 Z" fill="#777"/>
<g fill="#8e8e8e"><rect x="987" y="62" width="8.4" height="1.1"/><rect x="987" y="64.2" width="8.4" height="1.1"/><rect x="987" y="66.4" width="8.4" height="1.1"/></g>
<circle cx="834.2" cy="86.4" r="2.7" fill="none" stroke="#d8d8d8" stroke-width="1.3"/><path d="M832.2 88.6 L829.6 91.4" stroke="#d8d8d8" stroke-width="1.6" stroke-linecap="round"/>
<path d="M879.30 87.00 L881.60 89.40 L883.90 87.00" fill="none" stroke="#a0a0a0" stroke-width="1.1"/>
<rect x="898.8" y="84" width="7.8" height="7.6" fill="none" stroke="#d8d8d8" stroke-width="1.05"/><path d="M899.8 90.6 L901.8 87.8 L903.2 89.6 L904.2 88.6 L905.6 90.6 Z" fill="#d8d8d8"/>
<circle cx="920.4" cy="87.8" r="3.7" fill="none" stroke="#d8d8d8" stroke-width="1.15"/><path d="M917.8 90.4 A3.7 3.7 0 0 1 923 85.2 Z" fill="#d8d8d8"/>
<path d="M934.6 84 H942.2 V86.2 H941.4 L940.9 85.1 H939.3 V91 L940.4 91.3 V92 H936.4 V91.3 L937.5 91 V85.1 H935.9 L935.4 86.2 H934.6 Z" fill="#d8d8d8"/>
<rect x="953" y="85" width="5.6" height="5.8" fill="none" stroke="#d8d8d8" stroke-width="1.05"/><g fill="#d8d8d8"><rect x="951.8" y="83.8" width="2.2" height="2.2"/><rect x="957.6" y="83.8" width="2.2" height="2.2"/><rect x="951.8" y="89.8" width="2.2" height="2.2"/><rect x="957.6" y="89.8" width="2.2" height="2.2"/></g>
<path d="M971 83.8 H974.8 L977.4 86.4 V92.2 H971 Z" fill="none" stroke="#d8d8d8" stroke-width="1.05"/><rect x="970" y="88.2" width="4.2" height="4.2" fill="#d8d8d8"/>
<rect x="991.2" y="85" width="5.4" height="11" rx="2.7" fill="#3e3e3e"/><circle cx="993.8" cy="84.6" r="3.3" fill="#e9e9e9"/>
<path d="M902.30 107.20 L904.60 109.60 L906.90 107.20" fill="none" stroke="#a0a0a0" stroke-width="1.1"/>
<path d="M989.10 107.30 L991.20 109.50 L993.30 107.30" fill="none" stroke="#a0a0a0" stroke-width="1.1"/>
<path d="M989.10 127.30 L991.20 129.50 L993.30 127.30" fill="none" stroke="#a0a0a0" stroke-width="1.1"/>
<g fill="#9a9a9a"><rect x="853.4" y="124" width="2.2" height="2.2"/><rect x="857.8" y="124" width="2.2" height="2.2"/><rect x="855.6" y="126.2" width="2.2" height="2.2"/><rect x="859.9" y="126.2" width="2.2" height="2.2"/><rect x="853.4" y="128.4" width="2.2" height="2.2"/><rect x="857.8" y="128.4" width="2.2" height="2.2"/><rect x="855.6" y="130.6" width="2.2" height="2.2"/><rect x="859.9" y="130.6" width="2.2" height="2.2"/></g>
<path d="M878 123 L878.8 123.8 L873.4 130.4 L872.2 129.4 Z" fill="#bdbdbd"/><path d="M871.8 130 L872.8 131 C872.2 132.6 870.6 133 869.6 132.8 C870.6 132.2 870.8 130.8 871.8 130 Z" fill="#bdbdbd"/>
<g fill="#d8d8d8"><rect x="885.6" y="127.45" width="6.8" height="1.1"/><rect x="888.45" y="124.6" width="1.1" height="6.8"/><path d="M889 123 l2 2.2 h-4 Z M889 133 l2 -2.2 h-4 Z M884 128 l2.2 -2 v4 Z M894 128 l-2.2 -2 v4 Z"/></g>
<g fill="none" stroke="#d8d8d8" stroke-width="1.2"><path d="M902.8 123.2 V131.4 H911.4"/><path d="M900.2 125.6 H908.8 V133.4"/></g>
<rect x="917.6" y="127.4" width="8" height="5.8" rx="0.6" fill="#d8d8d8"/><path d="M919.2 127.4 V125.8 A2.4 2.4 0 0 1 924 125.8 V127.4" fill="none" stroke="#d8d8d8" stroke-width="1.2"/><rect x="921" y="129.2" width="1.2" height="2.2" fill="#535353"/>
<path d="M827.0 153 Q832.2 147.6 837.4000000000001 153 Q832.2 158.4 827.0 153 Z" fill="#e4e4e4"/><circle cx="832.2" cy="153" r="1.9" fill="#4a4a4a"/><circle cx="831.6" cy="152.3" r="0.6" fill="#e4e4e4"/>
<path d="M827.0 181.6 Q832.2 176.2 837.4000000000001 181.6 Q832.2 187.0 827.0 181.6 Z" fill="#e4e4e4"/><circle cx="832.2" cy="181.6" r="1.9" fill="#4a4a4a"/><circle cx="831.6" cy="180.9" r="0.6" fill="#e4e4e4"/>
<rect x="851.2" y="147.5" width="8" height="1.4" fill="#161616"/>
<rect x="859.9" y="155.9" width="10.2" height="10.2" fill="#666" stroke="#f2f2f2" stroke-width="1.1"/><rect x="862.4" y="158.4" width="5.2" height="5.2" fill="#4d4d4d" stroke="#dcdcdc" stroke-width="0.7"/><g fill="#f2f2f2"><rect x="861.6" y="157.6" width="1.6" height="1.6"/><rect x="866.8" y="157.6" width="1.6" height="1.6"/><rect x="861.6" y="162.8" width="1.6" height="1.6"/><rect x="866.8" y="162.8" width="1.6" height="1.6"/></g>
<rect x="968.6" y="181" width="7.2" height="5" rx="0.5" fill="none" stroke="#d8d8d8" stroke-width="1"/><path d="M970.2 181 V179.6 A2 2 0 0 1 974.2 179.6 V181" fill="none" stroke="#d8d8d8" stroke-width="1"/><rect x="971.7" y="182.6" width="1" height="1.8" fill="#d8d8d8"/>
<g fill="none" stroke="#7b7b7b" stroke-width="1.2"><rect x="851.4" y="517.8" width="5.8" height="4.4" rx="2.2"/><rect x="856.4" y="517.8" width="5.8" height="4.4" rx="2.2"/></g>
<rect x="890.4" y="516.2" width="9.4" height="7.6" rx="0.8" fill="#d8d8d8"/><ellipse cx="895.1" cy="520" rx="2.5" ry="2.2" fill="#535353"/>
<path d="M884.00 527.60 L884.00 525.60 L882.00 527.60 Z" fill="#a4a4a4"/>
<circle cx="915.2" cy="520.2" r="3.9" fill="none" stroke="#d8d8d8" stroke-width="1.2"/><path d="M912.4 523 A3.9 3.9 0 0 1 918 517.4 Z" fill="#d8d8d8"/>
<path d="M923.60 527.60 L923.60 525.60 L921.60 527.60 Z" fill="#a4a4a4"/>
<path d="M930.6 516.2 H934.2 L935.2 517.4 H939.8 V523.8 H930.6 Z" fill="#d8d8d8"/>
<path d="M950.8 516.6 H958.8 V523.8 H954 L950.8 520.8 Z" fill="none" stroke="#d8d8d8" stroke-width="1.2"/><path d="M950.8 520.8 H954 V523.8" fill="none" stroke="#d8d8d8" stroke-width="1"/>
<g fill="none" stroke="#d8d8d8" stroke-width="1.1"><path d="M970.4 517.6 H978.2 M972.8 517.4 V515.9 H975.8 V517.4"/><path d="M971.2 518 L971.7 524.8 H976.9 L977.4 518 Z"/><path d="M973.1 519.4 V523.6 M974.3 519.4 V523.6 M975.5 519.4 V523.6" stroke-width="0.7"/></g>
<rect x="359.2" y="213.5" width="93" height="32.3" fill="none" stroke="#000" stroke-width="3.2"/>
<rect x="356.2" y="210.8" width="3.2" height="3.2" fill="#fff" stroke="#222" stroke-width="0.8"/>
<rect x="452.4" y="210.6" width="3.2" height="3.2" fill="#fff" stroke="#222" stroke-width="0.8"/>
<rect x="356.0" y="245.8" width="3.2" height="3.2" fill="#333" stroke="#222" stroke-width="0.8"/>
<rect x="452.4" y="245.8" width="3.2" height="3.2" fill="#333" stroke="#222" stroke-width="0.8"/>
<path d="M256.1 63.7 L257.1 63.1 L320.9 155.4 L325.6 153.2 L326.2 167.8 L312.4 162.4 L316.9 158.2 Z" fill="#20d3d2"/>
</svg>
</body>
</html>
